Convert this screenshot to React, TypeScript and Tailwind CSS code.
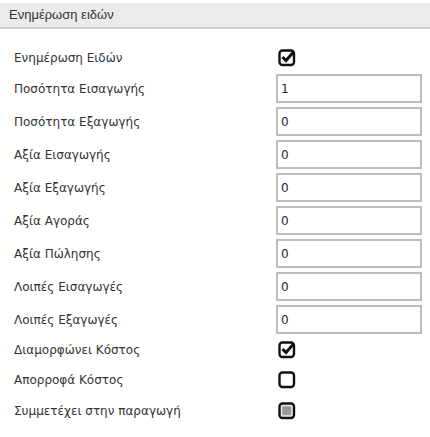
import React from "react";

type Row =
  | { label: string; kind: "check"; state: "on" | "off" | "mixed" }
  | { label: string; kind: "input"; value: string };

const rows: Row[] = [
  { label: "Ενημέρωση Ειδών", kind: "check", state: "on" },
  { label: "Ποσότητα Εισαγωγής", kind: "input", value: "1" },
  { label: "Ποσότητα Εξαγωγής", kind: "input", value: "0" },
  { label: "Αξία Εισαγωγής", kind: "input", value: "0" },
  { label: "Αξία Εξαγωγής", kind: "input", value: "0" },
  { label: "Αξία Αγοράς", kind: "input", value: "0" },
  { label: "Αξία Πώλησης", kind: "input", value: "0" },
  { label: "Λοιπές Εισαγωγές", kind: "input", value: "0" },
  { label: "Λοιπές Εξαγωγές", kind: "input", value: "0" },
  { label: "Διαμορφώνει Κόστος", kind: "check", state: "on" },
  { label: "Απορροφά Κόστος", kind: "check", state: "off" },
  { label: "Συμμετέχει στην παραγωγή", kind: "check", state: "mixed" },
];

function Box({ state }: { state: "on" | "off" | "mixed" }) {
  return (
    <svg width="18" height="18" viewBox="0 0 18 18">
      <rect
        x="1.5"
        y="1.5"
        width="14.5"
        height="14.5"
        rx="3"
        fill={state === "mixed" ? "#ececec" : "#fff"}
        stroke="#111"
        strokeWidth="2.4"
      />
      {state === "mixed" && <rect x="4.2" y="4.2" width="9" height="9" fill="#9a9a9a" />}
      {state === "on" && (
        <path d="M4.5 8 L8 11.5 L15.5 3" fill="none" stroke="#111" strokeWidth="3" />
      )}
    </svg>
  );
}

// heights tuned per row so controls land where the reference has them
function rowHeight(i: number, r: Row) {
  if (i === 0) return "h-[29px]";
  if (r.kind === "input") return "h-[33px]";
  if (i === 9) return "h-[28px]";
  return "h-[31px]";
}

export default function App() {
  return (
    <div className="w-[430px] h-[437px] bg-white overflow-hidden">
      <div className="mt-[3px] h-[26px] bg-[#ebebeb] border-b-2 border-[#cfcfcf] flex items-center pl-[9px]">
        <span className="text-[13px] text-[#333]" style={{ fontFamily: '"Liberation Sans", Arial, sans-serif' }}>
          Ενημέρωση ειδών
        </span>
      </div>

      <div className="pt-[14px] pl-[14px]">
        {rows.map((r, i) => (
          <div key={r.label} className={`flex items-center ${rowHeight(i, r)}`}>
            <div
              className="w-[262px] text-[12px] text-[#333]"
              style={{ fontFamily: '"DejaVu Sans", Verdana, sans-serif' }}
            >
              {r.label}
            </div>
            {r.kind === "input" ? (
              <div
                className="w-[146px] h-[29px] border-2 border-[#bdbdbd] bg-white flex items-center pl-[3px] text-[12px] text-[#1e1e3c]"
                style={{ fontFamily: '"DejaVu Sans", Verdana, sans-serif' }}
              >
                {r.value}
              </div>
            ) : (
              <div className="pl-[2px] flex items-center">
                <Box state={r.state} />
              </div>
            )}
          </div>
        ))}
      </div>
    </div>
  );
}
